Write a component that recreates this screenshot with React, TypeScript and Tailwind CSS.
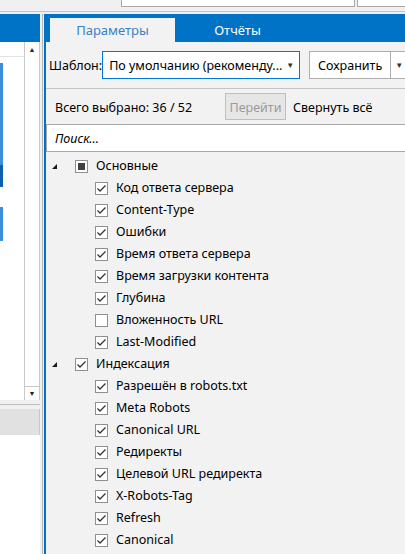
import React from "react";

type Item = { label: string; checked: boolean };

const groups: { title: string; state: "checked" | "mixed"; items: Item[] }[] = [
  {
    title: "Основные",
    state: "mixed",
    items: [
      { label: "Код ответа сервера", checked: true },
      { label: "Content-Type", checked: true },
      { label: "Ошибки", checked: true },
      { label: "Время ответа сервера", checked: true },
      { label: "Время загрузки контента", checked: true },
      { label: "Глубина", checked: true },
      { label: "Вложенность URL", checked: false },
      { label: "Last-Modified", checked: true },
    ],
  },
  {
    title: "Индексация",
    state: "checked",
    items: [
      { label: "Разрешён в robots.txt", checked: true },
      { label: "Meta Robots", checked: true },
      { label: "Canonical URL", checked: true },
      { label: "Редиректы", checked: true },
      { label: "Целевой URL редиректа", checked: true },
      { label: "X-Robots-Tag", checked: true },
      { label: "Refresh", checked: true },
      { label: "Canonical", checked: true },
    ],
  },
];

function CheckBox({ state }: { state: "checked" | "mixed" | "none" }) {
  return (
    <span className="w-[13px] h-[13px] border border-[#8f8f8f] bg-white flex items-center justify-center shrink-0">
      {state === "checked" && (
        <svg width="11" height="11" viewBox="0 0 11 11">
          <path d="M1.5 5.5 L4 8 L9.5 2.5" fill="none" stroke="#333" strokeWidth="1.3" />
        </svg>
      )}
      {state === "mixed" && <span className="w-[7px] h-[7px] bg-[#404040]" />}
    </span>
  );
}

function Expander() {
  return (
    <svg width="5" height="5" viewBox="0 0 5 5" className="shrink-0">
      <polygon points="5,0 5,5 0,5" fill="#1a1a1a" />
    </svg>
  );
}

function LeftPanel() {
  return (
    <div className="w-[40px] flex flex-col shrink-0">
      <div className="h-[28px] bg-[#0073c6]" />
      <div className="h-[358px] flex">
        {/* list column */}
        <div className="w-[24px] bg-white flex flex-col">
          <div className="h-[15px] border-b border-[#e3e3e3]" />
          <div className="h-[6px]" />
          <div className="h-[102px] w-[3px] bg-[#3d8fdc]" />
          <div className="h-[22px] w-[3px] bg-[#0f5fae]" />
          <div className="h-[20px]" />
          <div className="h-[34px] w-[3px] bg-[#3d8fdc]" />
        </div>
        {/* scrollbar */}
        <div className="w-[16px] bg-white border-l border-r border-[#c8c8c8] flex flex-col justify-between">
          <div className="h-[15px] flex items-center justify-center text-[7px] leading-none text-[#222]">▲</div>
          <div className="h-[13px] mb-[1px] border-t border-[#c8c8c8] flex items-center justify-center text-[7px] leading-none text-[#222]">▼</div>
        </div>
      </div>
      <div className="h-[4px]" />
      <div className="h-px bg-[#bdbdbd]" />
      <div className="h-[4px]" />
      <div className="h-[26px] bg-[#e1e1e1] border-r border-[#c8c8c8]" />
      <div className="flex-1 bg-white" />
    </div>
  );
}

function RightPanel() {
  return (
    <div className="flex-1 min-w-0 overflow-hidden border-l-2 border-[#0073c6] bg-[#f2f2f2] flex flex-col text-[12.5px] text-black">
      {/* tabs */}
      <div className="h-[28px] bg-[#0073c6] flex items-end pl-[4px] shrink-0">
        <div className="w-[125px] h-[24px] pt-[2px] bg-[#f2f2f2] flex items-center justify-center text-[#3a80c8] text-[13px]">
          Параметры
        </div>
        <div className="w-[125px] h-[24px] pt-[2px] flex items-center justify-center text-white text-[13px]">
          Отчёты
        </div>
      </div>

      {/* template row */}
      <div className="h-[47px] flex items-center pl-[3px] border-b border-[#c4c4c4] shrink-0 whitespace-nowrap">
        <span className="w-[55px] pt-[3px]">Шаблон:</span>
        <div className="w-[198px] shrink-0 h-[28px] bg-white border border-[#0078d7] flex items-center pl-[6px] pr-[5px]">
          <span className="flex-1 pt-[3px] overflow-hidden">По умолчанию (рекоменду...</span>
          <span className="text-[8px] text-[#333]">▼</span>
        </div>
        <div className="ml-[9px] h-[28px] flex shrink-0 bg-white border border-[#adadad]">
          <div className="w-[81px] pt-[3px] flex items-center justify-center border-r border-[#adadad]">Сохранить</div>
          <div className="w-[16px] flex items-center pl-[4px] text-[8px] text-[#333]">▼</div>
        </div>
      </div>

      {/* selection row */}
      <div className="h-[35px] flex items-center pl-[9px] shrink-0 whitespace-nowrap">
        <span className="w-[170px] pt-[4px]">Всего выбрано: 36 / 52</span>
        <div className="w-[61px] h-[27px] pt-[3px] border border-[#bfbfbf] bg-[#e6e6e6] text-[#9a9a9a] flex items-center justify-center">
          Перейти
        </div>
        <span className="ml-[7px] pt-[4px]">Свернуть всё</span>
      </div>

      {/* search */}
      <div className="h-[28px] pt-[3px] bg-white border-t border-b border-l border-[#a8a8a8] flex items-center pl-[8px] italic shrink-0">
        Поиск...
      </div>

      {/* tree */}
      <div className="pt-[3px] flex flex-col">
        {groups.map((g) => (
          <React.Fragment key={g.title}>
            <div className="h-[22px] flex items-center pl-[6px]">
              <Expander />
              <span className="ml-[18px]">
                <CheckBox state={g.state} />
              </span>
              <span className="ml-[8px]">{g.title}</span>
            </div>
            {g.items.map((it) => (
              <div key={it.label} className="h-[22px] flex items-center pl-[49px]">
                <CheckBox state={it.checked ? "checked" : "none"} />
                <span className="ml-[8px] whitespace-nowrap">{it.label}</span>
              </div>
            ))}
          </React.Fragment>
        ))}
      </div>
    </div>
  );
}

export default function App() {
  return (
    <div className="w-[405px] h-[554px] overflow-hidden bg-[#f0f0f0] flex flex-col font-['Noto_Sans',sans-serif]">
      <div className="h-[11px] flex shrink-0">
        <div className="ml-[121px] w-[234px] h-[7px] bg-white border-l border-r border-b border-[#a8a8a8] overflow-hidden relative">
          <span className="absolute left-[43px] top-[-15px] text-[12px] leading-[16px] text-black whitespace-nowrap">(как у</span>
        </div>
        <div className="ml-[2px] flex-1 h-[7px] bg-white border-l border-b border-[#a8a8a8]" />
      </div>
      <div className="h-px bg-[#c4c4c4] shrink-0" />
      <div className="h-[2px] shrink-0" />
      <div className="flex-1 flex min-h-0">
        <LeftPanel />
        <div className="w-[2px] shrink-0" />
        <div className="w-px shrink-0 bg-[#b5b5b5]" />
        <div className="w-px shrink-0" />
        <RightPanel />
      </div>
    </div>
  );
}
